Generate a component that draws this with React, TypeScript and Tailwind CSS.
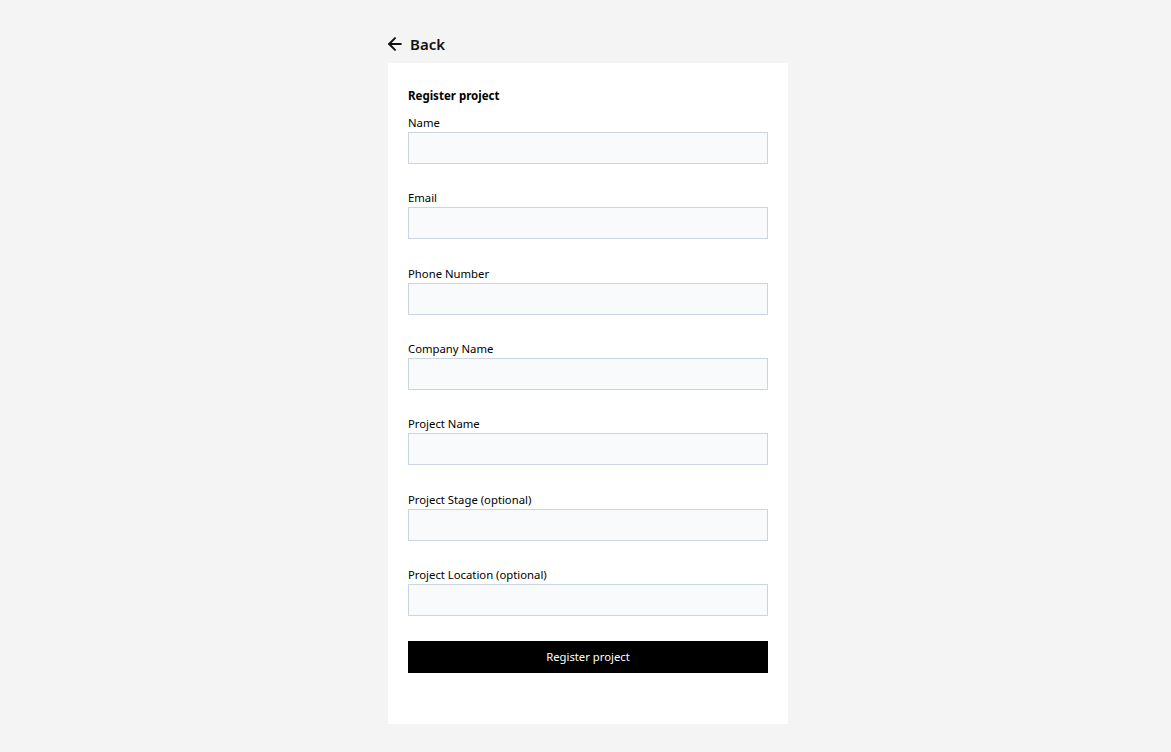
import { ArrowLeft } from 'lucide-react';

const fields = [
  'Name',
  'Email',
  'Phone Number',
  'Company Name',
  'Project Name',
  'Project Stage (optional)',
  'Project Location (optional)',
];

export default function App() {
  return (
    <div
      className="min-h-screen bg-[#f4f4f4] flex justify-center pl-[5px] pt-[32px] text-black"
      style={{ fontFamily: '"Noto Sans", "Open Sans", sans-serif' }}
    >
      <div className="w-[400px] flex flex-col">
        <button className="flex items-center gap-[5px] h-[24px] -ml-[3px] text-[15px] font-semibold leading-[24px] text-[#111]">
          <ArrowLeft size={20} strokeWidth={2.4} />
          Back
        </button>

        <div className="mt-[7px] bg-white px-5 pt-[23px] pb-[51px]">
          <h2 className="text-[11.5px] font-bold leading-[20px] mb-[8px]">Register project</h2>

          {fields.map((label) => (
            <div key={label} className="mb-[25.33px]">
              <label className="block text-[11.3px] leading-[18px]">{label}</label>
              <input
                type="text"
                className="block w-full h-[32px] bg-[#f8fafc] border border-[#cbd5e1] outline-none px-2 text-[12px]"
              />
            </div>
          ))}

          <button className="w-full h-[32px] bg-black text-white text-[11.3px]">Register project</button>
        </div>
      </div>
    </div>
  );
}
